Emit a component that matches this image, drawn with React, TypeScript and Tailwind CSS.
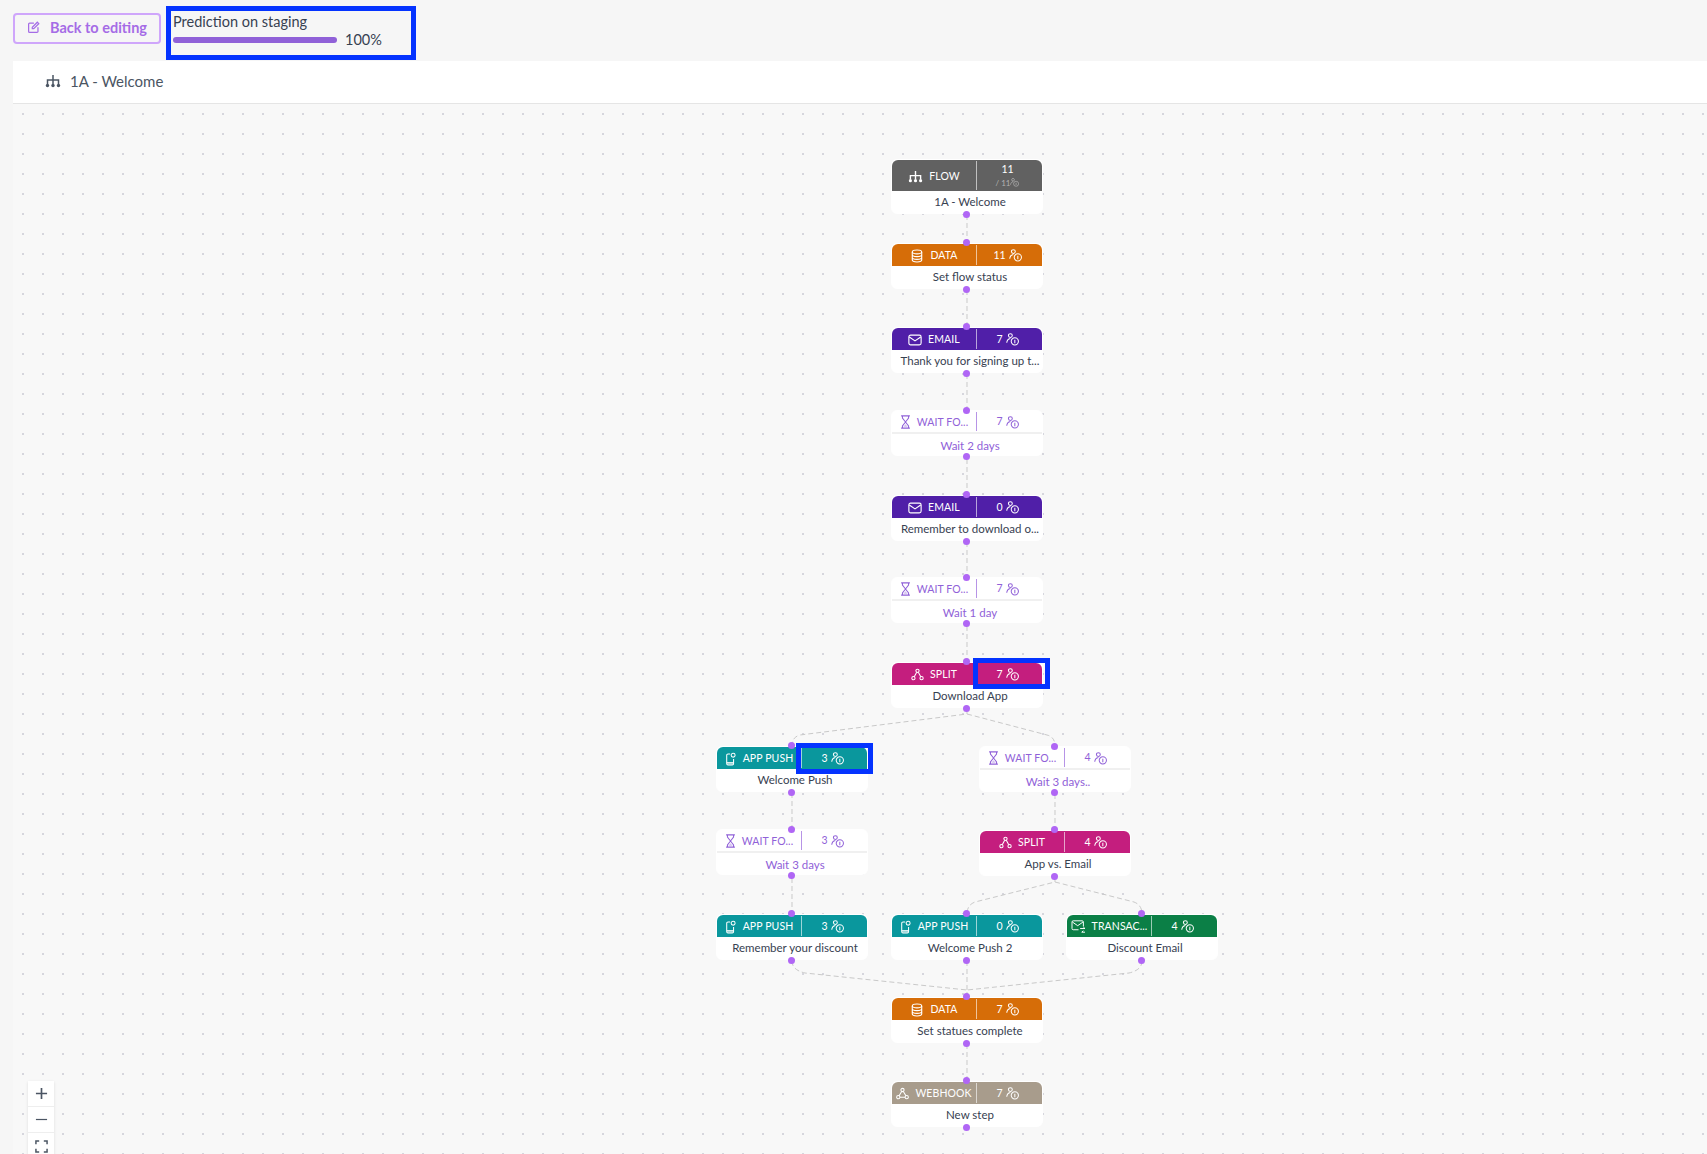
import React from "react";

type IconProps = { className?: string };

const FlowIcon = ({ className }: IconProps) => (
  <svg viewBox="0 0 16 14" className={className} fill="none" stroke="currentColor" strokeWidth="1.500">
    <path d="M8 1v9M2.500 10V6h11v4" />
    <circle cx="2.500" cy="11.500" r="1.700" fill="currentColor" stroke="none" />
    <circle cx="8" cy="11.500" r="1.700" fill="currentColor" stroke="none" />
    <circle cx="13.500" cy="11.500" r="1.700" fill="currentColor" stroke="none" />
  </svg>
);
const DataIcon = ({ className }: IconProps) => (
  <svg viewBox="0 0 16 16" className={className} fill="none" stroke="currentColor" strokeWidth="1.300">
    <ellipse cx="8" cy="3.400" rx="5.400" ry="2.200" />
    <path d="M2.600 3.400v9.200c0 1.200 2.400 2.200 5.400 2.200s5.400-1 5.400-2.200V3.400M2.600 6.500c0 1.200 2.400 2.200 5.400 2.200s5.400-1 5.400-2.200M2.600 9.600c0 1.200 2.400 2.200 5.400 2.200s5.400-1 5.400-2.200" />
  </svg>
);
const MailIcon = ({ className }: IconProps) => (
  <svg viewBox="0 0 16 13" className={className} fill="none" stroke="currentColor" strokeWidth="1.300">
    <rect x="1" y="1" width="14" height="11" rx="2" />
    <path d="M1.500 3l6.500 4.500L14.500 3" />
  </svg>
);
const HourglassIcon = ({ className }: IconProps) => (
  <svg viewBox="0 0 12 16" className={className} fill="none" stroke="currentColor" strokeWidth="1.200">
    <path d="M1 1h10M1 15h10M2.500 1v2.500L6 8l3.500-4.500V1M2.500 15v-2.500L6 8l3.500 4.500V15" />
    <path d="M3.500 13.500L6 10.500l2.500 3z" fill="currentColor" opacity="0.4" stroke="none" />
  </svg>
);
const SplitIcon = ({ className }: IconProps) => (
  <svg viewBox="0 0 16 16" className={className} fill="none" stroke="currentColor" strokeWidth="1.300">
    <circle cx="8" cy="3.500" r="2" />
    <circle cx="3" cy="12.500" r="2" />
    <circle cx="13" cy="12.500" r="2" />
    <path d="M7 5.300L4 10.800M9 5.300l3 5.500" />
  </svg>
);
const PushIcon = ({ className }: IconProps) => (
  <svg viewBox="0 0 14 16" className={className} fill="none" stroke="currentColor" strokeWidth="1.200">
    <path d="M6 2.200H3.500A1.500 1.500 0 002 3.700v9.800A1.500 1.500 0 003.500 15h5A1.500 1.500 0 0010 13.500V8" />
    <path d="M2 12.300h8" />
    <circle cx="9.500" cy="3.500" r="2.300" />
    <rect x="2.500" y="12.500" width="7" height="2.200" fill="currentColor" opacity="0.5" stroke="none" />
  </svg>
);
const TransacIcon = ({ className }: IconProps) => (
  <svg viewBox="0 0 18 16" className={className} fill="none" stroke="currentColor" strokeWidth="1.200">
    <path d="M9 12H2.500A1.500 1.500 0 011 10.500v-8A1.500 1.500 0 012.500 1h11A1.500 1.500 0 0115 2.500V8" />
    <path d="M1.500 2.500L8 7l6.500-4.500" />
    <path d="M11 10.500h6M15 8.800l2 1.700M13 15h4M13 15l2-1.700" />
  </svg>
);
const WebhookIcon = ({ className }: IconProps) => (
  <svg viewBox="0 0 16 15" className={className} fill="none" stroke="currentColor" strokeWidth="1.300">
    <circle cx="8" cy="3.200" r="2" />
    <circle cx="2.800" cy="12" r="2" />
    <circle cx="13.200" cy="12" r="2" />
    <path d="M7 5L3.800 10.200M9 5l3.200 5.200M4.800 12h6.400" />
  </svg>
);
const PersonClock = ({ className }: IconProps) => (
  <svg viewBox="0 0 14 14" className={className} fill="none" stroke="currentColor" strokeWidth="1.100">
    <circle cx="4.700" cy="2.800" r="2.100" />
    <path d="M.8 10.500C1 8 2.600 6.200 4.700 5.800" />
    <circle cx="9.500" cy="9" r="3.900" />
    <path d="M9.500 7.200v3.800" />
  </svg>
);
const EditIcon = ({ className }: IconProps) => (
  <svg viewBox="0 0 16 16" className={className} fill="none" stroke="currentColor" strokeWidth="1.500" strokeLinecap="round">
    <path d="M8 2.500H3.200A1.200 1.200 0 002 3.700v9.100A1.200 1.200 0 003.200 14h9.100a1.200 1.200 0 001.200-1.200V8" />
    <path d="M6.500 9.500v-1.800L12.700 1.500l1.800 1.800-6.200 6.200z" />
  </svg>
);

type NodeSpec = {
  x: number;
  y: number;
  icon: React.ComponentType<IconProps>;
  iconClass: string;
  label: string;
  count: string;
  title: string;
  bg?: string;
  tall?: boolean;
};

function FlowNode({ n }: { n: NodeSpec }) {
  const Icon = n.icon;
  const wait = !n.bg;
  return (
    <div
      className={
        "absolute w-[152px] rounded-md bg-white border border-white text-center " +
        (n.tall ? "h-[55px]" : "h-[46px]")
      }
      style={{ left: n.x, top: n.y }}
    >
      {!n.tall && (
        <span
          className={
            "absolute left-[71px] w-[7px] h-[7px] rounded-full bg-[#b066f5] z-10 " +
            (wait ? "top-[-4px]" : "top-[-5px]")
          }
        />
      )}
      <span className="absolute left-[71px] bottom-[-5px] w-[7px] h-[7px] rounded-full bg-[#b066f5] z-10" />
      <div
        className={
          "flex rounded-t-md " +
          (n.tall ? "h-[31px] " : wait ? "h-[23px] " : "h-[22px] ") +
          (wait ? "text-[#9061d8] border-b-2 border-[#f0f0f0] " : "text-white ")
        }
        style={n.bg ? { backgroundColor: n.bg } : undefined}
      >
        <div className="w-[84px] flex items-center justify-center gap-[6px] pt-px">
          <Icon className={"shrink-0 " + n.iconClass} />
          <span className="text-[10.500px] leading-none whitespace-nowrap tracking-[0.1px]">{n.label}</span>
        </div>
        <div className={"w-px my-px " + (wait ? "bg-[#b794e6]" : "bg-white/60")} />
        <div className="flex-1 flex items-center justify-center gap-[3px] pr-[4px]">
          {n.tall ? (
            <div className="flex flex-col items-center leading-none">
              <span className="text-[10.500px] mb-[4px]">{n.count}</span>
              <span className="flex items-center text-[8px] text-white/50">
                / 11
                <PersonClock className="w-[9px] h-[9px]" />
              </span>
            </div>
          ) : (
            <>
              <span className="text-[10.500px] leading-none">{n.count}</span>
              <PersonClock className="w-[13px] h-[13px] mt-[1px]" />
            </>
          )}
        </div>
      </div>
      <div
        className={
          "pl-[6px] text-[11.500px] leading-none whitespace-nowrap " +
          (wait ? "text-[#9061d8] pt-[6px]" : "text-[#374151] pt-[5px]")
        }
      >
        {n.title}
      </div>
    </div>
  );
}

const PURPLE = "#501fa8";
const ORANGE = "#d66d08";
const PINK = "#c41e7e";
const TEAL = "#0a979d";
const HG = "w-[11px] h-[14px]";

const nodes: NodeSpec[] = [
  { x: 891, y: 159, icon: FlowIcon, iconClass: "w-[15px] h-[13px]", label: "FLOW", count: "11", title: "1A - Welcome", bg: "#616161", tall: true },
  { x: 891, y: 243, icon: DataIcon, iconClass: "w-[14px] h-[14px]", label: "DATA", count: "11", title: "Set flow status", bg: ORANGE },
  { x: 891, y: 327, icon: MailIcon, iconClass: "w-[14px] h-[12px]", label: "EMAIL", count: "7", title: "Thank you for signing up t...", bg: PURPLE },
  { x: 891, y: 410, icon: HourglassIcon, iconClass: HG, label: "WAIT FO...", count: "7", title: "Wait 2 days" },
  { x: 891, y: 495, icon: MailIcon, iconClass: "w-[14px] h-[12px]", label: "EMAIL", count: "0", title: "Remember to download o...", bg: PURPLE },
  { x: 891, y: 577, icon: HourglassIcon, iconClass: HG, label: "WAIT FO...", count: "7", title: "Wait 1 day" },
  { x: 891, y: 662, icon: SplitIcon, iconClass: "w-[13px] h-[13px]", label: "SPLIT", count: "7", title: "Download App", bg: PINK },
  { x: 716, y: 746, icon: PushIcon, iconClass: "w-[12px] h-[14px]", label: "APP PUSH", count: "3", title: "Welcome Push", bg: TEAL },
  { x: 979, y: 746, icon: HourglassIcon, iconClass: HG, label: "WAIT FO...", count: "4", title: "Wait 3 days.." },
  { x: 716, y: 829, icon: HourglassIcon, iconClass: HG, label: "WAIT FO...", count: "3", title: "Wait 3 days" },
  { x: 979, y: 830, icon: SplitIcon, iconClass: "w-[13px] h-[13px]", label: "SPLIT", count: "4", title: "App vs. Email", bg: PINK },
  { x: 716, y: 914, icon: PushIcon, iconClass: "w-[12px] h-[14px]", label: "APP PUSH", count: "3", title: "Remember your discount", bg: TEAL },
  { x: 891, y: 914, icon: PushIcon, iconClass: "w-[12px] h-[14px]", label: "APP PUSH", count: "0", title: "Welcome Push 2", bg: TEAL },
  { x: 1066, y: 914, icon: TransacIcon, iconClass: "w-[15px] h-[13px]", label: "TRANSAC...", count: "4", title: "Discount Email", bg: "#0b7f46" },
  { x: 891, y: 997, icon: DataIcon, iconClass: "w-[14px] h-[14px]", label: "DATA", count: "7", title: "Set statues complete", bg: ORANGE },
  { x: 891, y: 1081, icon: WebhookIcon, iconClass: "w-[13px] h-[13px]", label: "WEBHOOK", count: "7", title: "New step", bg: "#a89c8c" },
];

const edges = [
  "M967 215V243",
  "M967 290V327",
  "M967 374V410",
  "M967 459V494",
  "M967 542V578",
  "M967 626V662",
  "M967 709V714L800 735Q792 737 792 746",
  "M967 714L1047 735Q1055 737 1055 746",
  "M792 793V829",
  "M792 878V914",
  "M1055 794V830",
  "M1055 877V882L975 902Q967 905 967 914",
  "M1055 882L1134 902Q1142 905 1142 914",
  "M792 961Q792 970 805 973L967 990V997",
  "M967 961V997",
  "M1142 961Q1142 970 1129 973L967 990",
  "M967 1044V1081",
];

export default function App() {
  return (
    <div
      className="relative w-[1707px] h-[1154px] overflow-hidden bg-[#f6f6f6] text-[#374151]"
      style={{ fontFamily: '"Lato", "Noto Sans", sans-serif' }}
    >
      <div className="flex items-start h-[61px]">
        <button className="ml-[13px] mt-[13px] w-[148px] h-[31px] flex items-center justify-center gap-[10px] pb-[2px] rounded border-2 border-[#cfa6fb] text-[#a56ce6] font-bold text-[14.500px]">
          <EditIcon className="w-[13px] h-[13px]" />
          Back to editing
        </button>
        <div className="ml-[5px] mt-[6px] w-[250px] h-[54px] border-[5px] border-[#0433ff] pl-[2px]">
          <div className="text-[14.500px] leading-[22px] text-[#374151]">Prediction on staging</div>
          <div className="flex items-center gap-[8px]">
            <div className="w-[164px] h-[6px] rounded-full bg-[#9061d8]" />
            <span className="text-[14.500px] leading-none text-[#374151]">100%</span>
          </div>
        </div>
      </div>

      <div className="ml-[13px] h-[1093px] flex flex-col">
        <div className="h-[43px] bg-white border-b border-[#e5e5e5] flex items-center pl-[32px] gap-[9px] pb-[2px] shrink-0">
          <FlowIcon className="w-[16px] h-[14px] text-[#4b5563]" />
          <span className="text-[15px] text-[#4b5563]">1A - Welcome</span>
        </div>
        <div className="flex-1 bg-[#f8f8f8] bg-[radial-gradient(circle,#d6d6dd_1px,transparent_1.2px)] bg-[length:20px_20px]" />
      </div>

      <svg className="absolute inset-0 w-[1707px] h-[1154px] pointer-events-none" viewBox="0 0 1707 1154" fill="none">
        {edges.map((d) => (
          <path key={d} d={d} stroke="#c9c9c9" strokeWidth="1" strokeDasharray="5 3" />
        ))}
      </svg>

      {nodes.map((n) => (
        <FlowNode key={n.x + "-" + n.y} n={n} />
      ))}

      <div className="absolute left-[973px] top-[658px] w-[77px] h-[31px] border-[5px] border-[#0433ff] z-20" />
      <div className="absolute left-[796px] top-[743px] w-[77px] h-[31px] border-[5px] border-[#0433ff] z-20" />

      <div className="absolute left-[28px] top-[1081px] w-[26px] bg-white shadow-sm flex flex-col text-[#4b5563] z-20">
        <div className="h-[26px] flex items-center justify-center border-b border-[#eeeeee]">
          <svg viewBox="0 0 14 14" className="w-[13px] h-[13px]" fill="none" stroke="currentColor" strokeWidth="1.800">
            <path d="M7 1v12M1 7h12" />
          </svg>
        </div>
        <div className="h-[26px] flex items-center justify-center border-b border-[#eeeeee]">
          <svg viewBox="0 0 14 14" className="w-[13px] h-[13px]" fill="none" stroke="currentColor" strokeWidth="1.300">
            <path d="M1 7h12" />
          </svg>
        </div>
        <div className="h-[26px] flex items-center justify-center">
          <svg viewBox="0 0 14 14" className="w-[13px] h-[13px]" fill="none" stroke="currentColor" strokeWidth="1.600">
            <path d="M1 4.500V1h3.500M9.500 1H13v3.500M13 9.500V13H9.500M4.500 13H1V9.500" />
          </svg>
        </div>
      </div>
    </div>
  );
}
